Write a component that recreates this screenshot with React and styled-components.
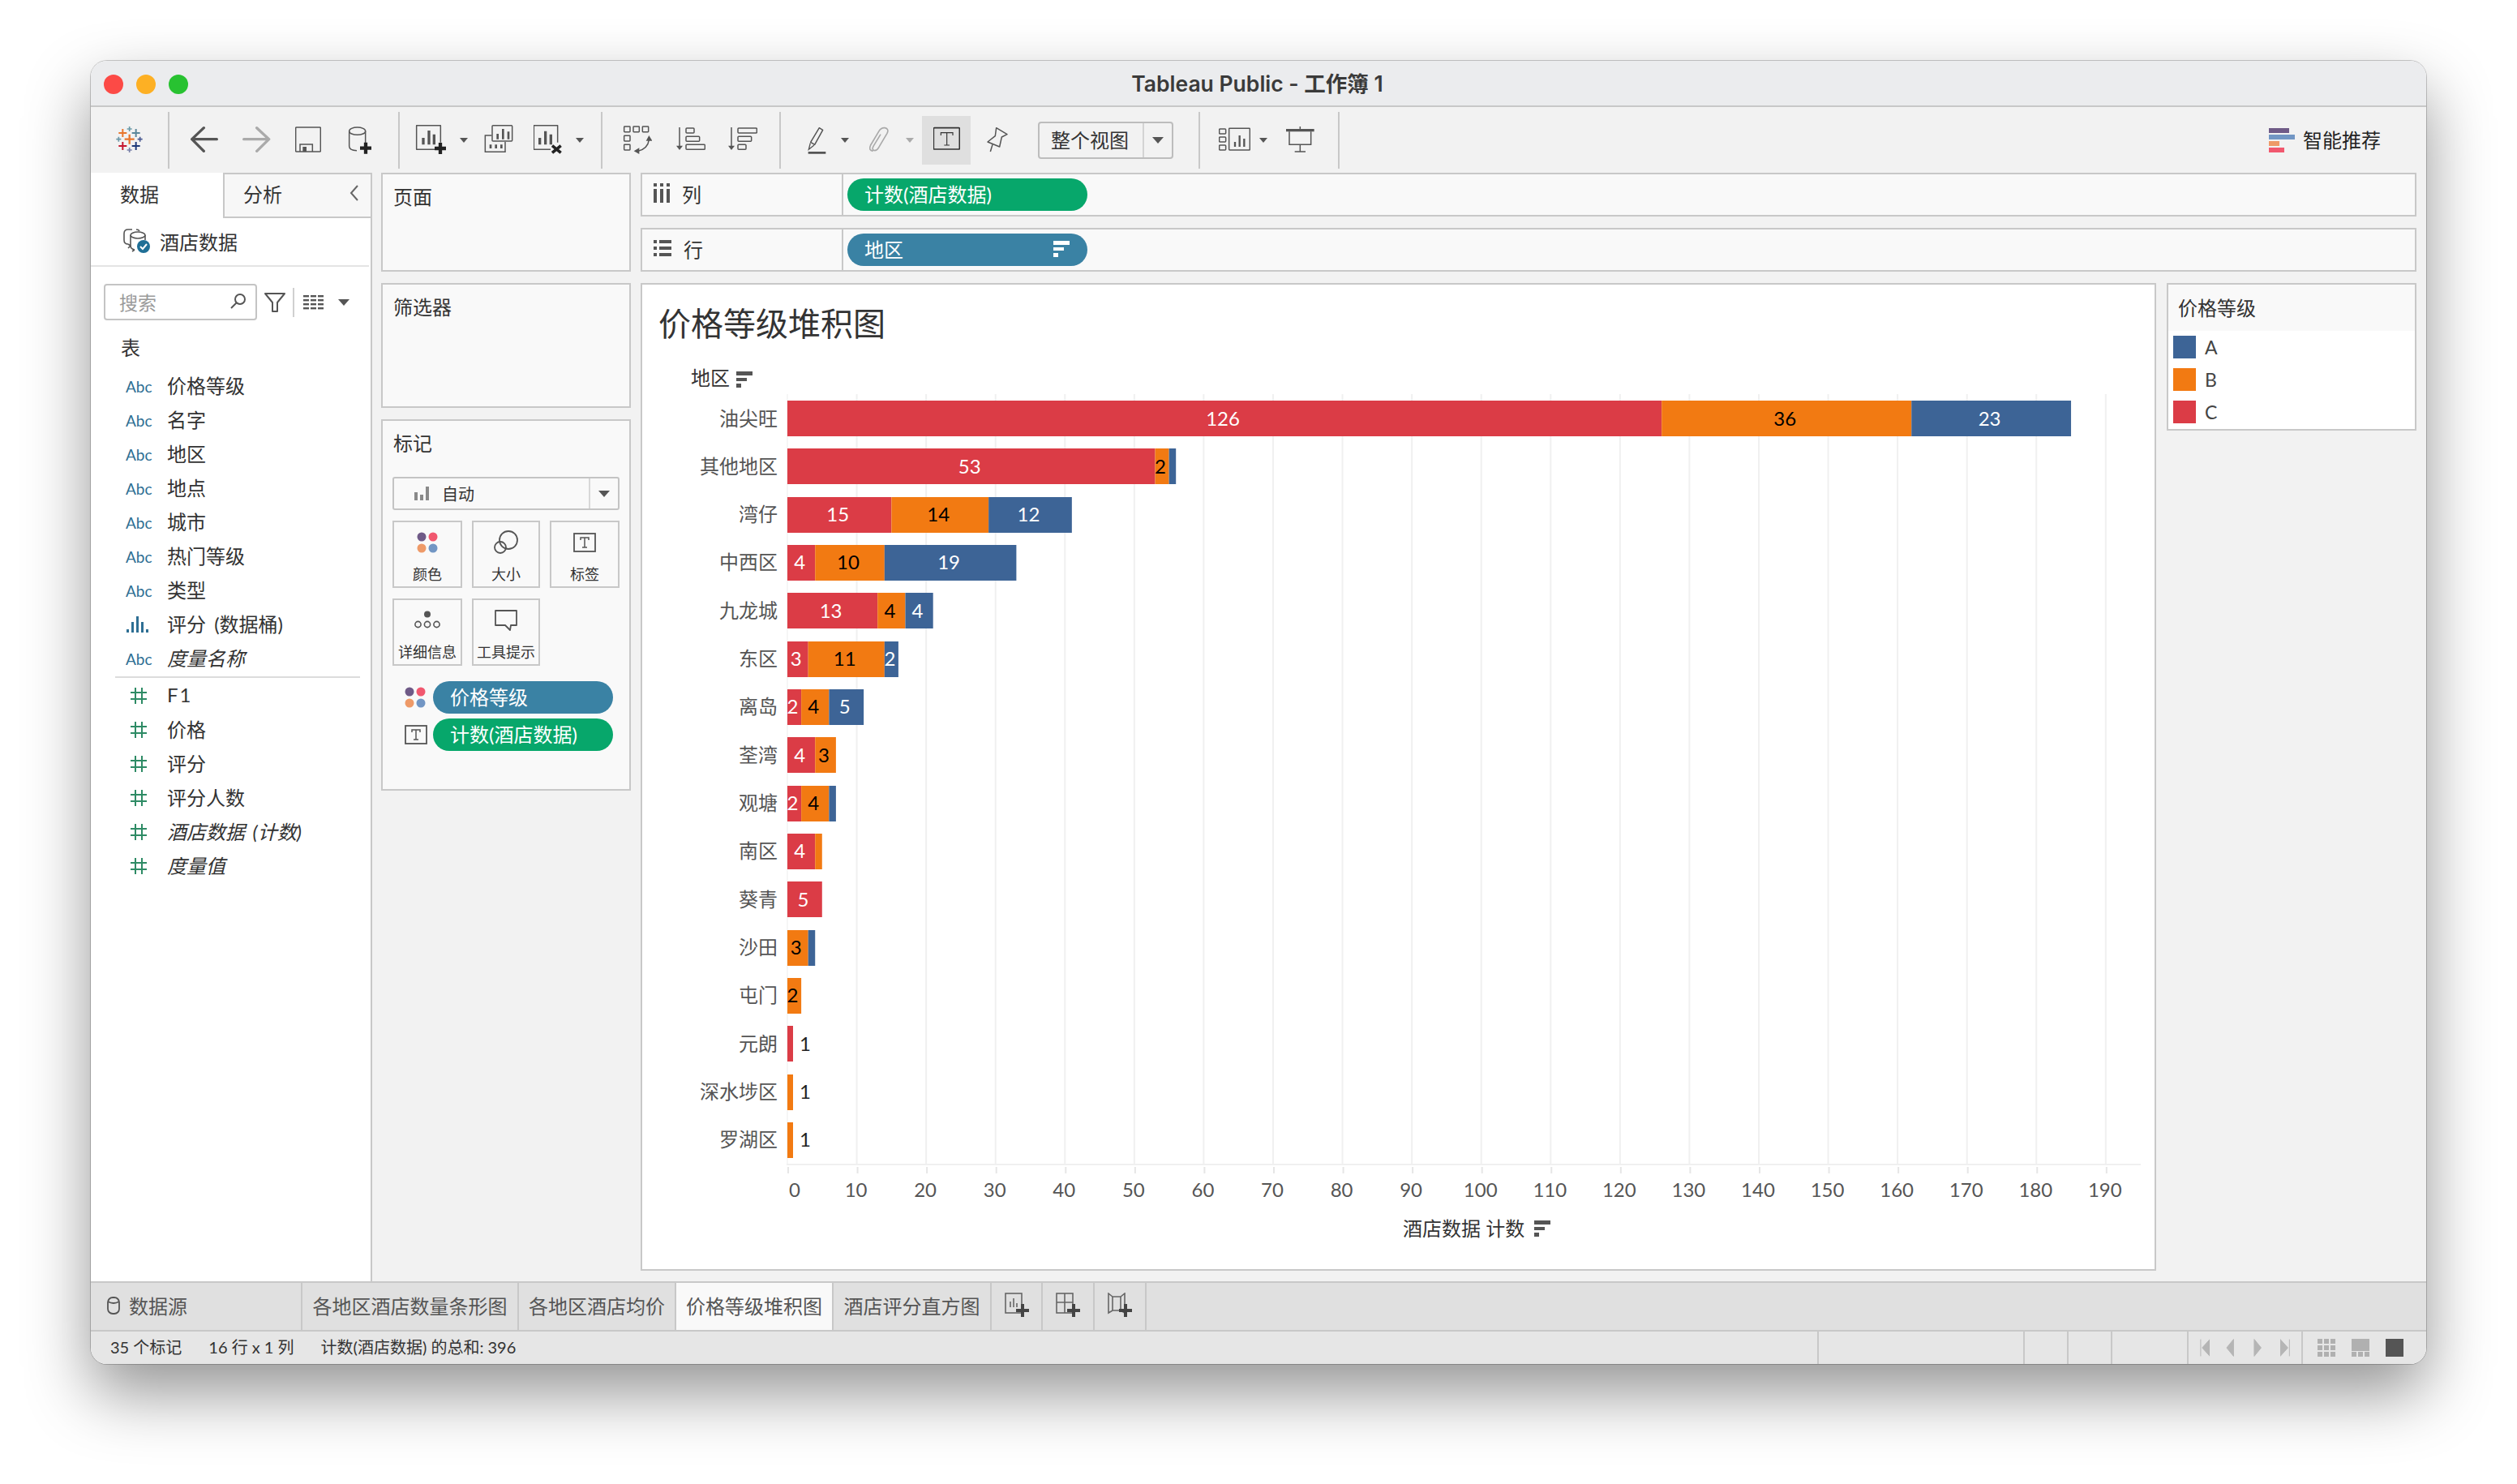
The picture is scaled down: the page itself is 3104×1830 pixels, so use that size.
import React from 'react'
import styled, { createGlobalStyle } from 'styled-components'

const FONT = `Lato, "Noto Sans CJK SC", sans-serif`
const LINE = '#c8c8c8'
const RED = '#db3c46'
const ORANGE = '#f27a12'
const BLUE = '#3d6496'
const GREEN = '#07a76b'
const STEEL = '#3a82a4'

const Global = createGlobalStyle`
  * { box-sizing: border-box; }
  html, body { margin: 0; height: 1830px; background: #fff; overflow: hidden; }
  body { font-family: ${FONT}; color: #333; }
`

const Desktop = styled.div`
  padding: 75px 112px 0;
`

const Win = styled.div`
  width: 2880px;
  height: 1607px;
  border-radius: 20px;
  overflow: hidden;
  display: flex;
  flex-direction: column;
  background: #f2f2f2;
`

const Frame = styled.div`
  border-radius: 20px;
  box-shadow: 0 36px 80px rgba(0,0,0,.42), 0 0 0 1px rgba(0,0,0,.2);
`

const TitleBar = styled.div`
  height: 57px;
  flex: none;
  position: relative;
  display: flex;
  align-items: center;
  justify-content: center;
  padding: 0 3px 3px 0;
  background: #ebecee;
  border-bottom: 2px solid ${LINE};
`

const Lights = styled.div`
  position: absolute;
  left: 16px;
  top: 17px;
  display: flex;
  gap: 16px;
`

const Light = styled.span`
  width: 24px;
  height: 24px;
  border-radius: 50%;
  background: ${p => p.$c};
`

const WinTitle = styled.div`
  font-family: Inter, "Noto Sans CJK SC", sans-serif;
  font-size: 26.5px;
  font-weight: 600;
  color: #3a3a3a;
`

const Toolbar = styled.div`
  height: 81px;
  flex: none;
  display: flex;
  align-items: center;
  padding: 0 56px 0 31px;
`

const Sep = styled.span`
  width: 2px;
  height: 70px;
  background: ${LINE};
  margin-left: ${p => p.$ml}px;
  flex: none;
`

const Tool = styled.span`
  display: flex;
  align-items: center;
  justify-content: center;
  flex: none;
  margin-left: ${p => p.$ml || 0}px;
  width: ${p => p.$w}px;
  height: ${p => p.$h || 55}px;
  background: ${p => p.$on ? '#dfdfdf' : 'none'};
`

const Caret = styled.span`
  flex: none;
  width: 0;
  height: 0;
  margin-left: ${p => p.$ml || 0}px;
  margin-right: ${p => p.$mr || 0}px;
  border-left: ${p => (p.$w || 10) / 2}px solid transparent;
  border-right: ${p => (p.$w || 10) / 2}px solid transparent;
  border-top: ${p => (p.$w || 10) * 0.6}px solid ${p => p.$c || '#555'};
`

const FitBox = styled.div`
  margin-left: 36px;
  width: 167px;
  height: 46px;
  flex: none;
  display: flex;
  align-items: center;
  border: 2px solid #bdbdbd;
  border-radius: 4px;
`

const FitText = styled.div`
  flex: 1;
  font-size: 24px;
  padding: 0 0 3px 14px;
  color: #333;
`

const FitArrow = styled.div`
  width: 36px;
  height: 100%;
  display: flex;
  align-items: center;
  justify-content: center;
  border-left: 2px solid #d4d4d4;
`

const Smart = styled.div`
  margin-left: auto;
  display: flex;
  align-items: center;
  gap: 10px;
  font-size: 24px;
  color: #222;
`

const SmartText = styled.span`
  padding-bottom: 3px;
`

const Body = styled.div`
  height: 1367px;
  flex: none;
  display: flex;
`

const DataPane = styled.div`
  width: 347px;
  flex: none;
  background: #fff;
  border-right: 2px solid ${LINE};
`

const Tabs = styled.div`
  height: 56px;
  display: flex;
`

const PaneTab = styled.div`
  display: flex;
  align-items: center;
  font-size: 24px;
  color: #333;
  width: ${p => p.$w}px;
  padding-left: ${p => p.$pl}px;
  padding-bottom: 6px;
  background: ${p => p.$on ? '#fff' : '#f7f7f7'};
  border-left: ${p => p.$on ? 'none' : `2px solid ${LINE}`};
  border-top: ${p => p.$on ? 'none' : `2px solid ${LINE}`};
  border-bottom: ${p => p.$on ? 'none' : `2px solid ${LINE}`};
`

const Chevron = styled.svg`
  margin-left: auto;
  margin-right: 14px;
`

const SourceRow = styled.div`
  height: 60px;
  margin-right: 2px;
  display: flex;
  align-items: center;
  gap: 11px;
  padding: 0 0 2px 40px;
  font-size: 24px;
  color: #333;
  border-bottom: 2px solid #e4e4e4;
`

const SearchRow = styled.div`
  display: flex;
  align-items: center;
  margin: 21px 0 14px 16px;
`

const SearchBox = styled.div`
  width: 189px;
  height: 45px;
  display: flex;
  align-items: center;
  justify-content: space-between;
  padding: 0 12px 2px 17px;
  margin-right: 9px;
  font-size: 23px;
  color: #9a9a9a;
  border: 2px solid #c4c4c4;
  border-radius: 4px;
`

const VBar = styled.span`
  width: 2px;
  height: 36px;
  background: #d0d0d0;
  margin: 0 11px 0 9px;
`

const SectionHead = styled.div`
  height: 42px;
  line-height: 39px;
  padding-left: 37px;
  font-size: 24px;
  color: #333;
  margin-bottom: 4px;
`

const FieldRow = styled.div`
  height: 42px;
  display: flex;
  align-items: center;
  padding-left: 43px;
`

const TypeSlot = styled.span`
  width: 52px;
  flex: none;
  display: flex;
  align-items: center;
  padding-left: ${p => p.$pl || 0}px;
  font-size: 19px;
  color: #2e6f94;
`

const FieldName = styled.span`
  font-size: 24px;
  margin: -4px 0 0 -1px;
  color: #333;
  font-style: ${p => p.$i ? 'italic' : 'normal'};
  letter-spacing: ${p => p.$sp || 0}px;
  word-spacing: 4px;
`

const ListRule = styled.div`
  height: 2px;
  margin: 1px 13px 1px 30px;
  background: #dcdcdc;
`

const ShelfCol = styled.div`
  width: 308px;
  flex: none;
  margin-left: 11px;
  display: flex;
  flex-direction: column;
  gap: 14px;
`

const Card = styled.div`
  height: ${p => p.$h}px;
  flex: none;
  background: #f9f9f9;
  border: 2px solid ${LINE};
  padding: ${p => p.$pt || 13}px 12px 0 13px;
`

const CardLabel = styled.div`
  font-size: 24px;
  line-height: 30px;
  color: #333;
`

const MarkSelect = styled.div`
  height: 41px;
  width: 280px;
  margin-top: 26px;
  margin-left: -1px;
  display: flex;
  align-items: center;
  border: 2px solid #c4c4c4;
  border-radius: 3px;
  font-size: 20px;
  padding-left: 25px;
  gap: 15px;
`

const MarkArrow = styled.span`
  margin-left: auto;
  width: 36px;
  height: 100%;
  display: flex;
  align-items: center;
  justify-content: center;
  border-left: 2px solid #d8d8d8;
`

const MarkGrid = styled.div`
  display: grid;
  grid-template-columns: 86px 84px 86px;
  column-gap: 12px;
  row-gap: 13px;
  margin: 13px 0 0 -1px;
`

const MarkBtn = styled.div`
  height: 83px;
  display: flex;
  flex-direction: column;
  align-items: center;
  border: 2px solid ${LINE};
  font-size: 18px;
  color: #333;
`

const MarkIcon = styled.div`
  height: 50px;
  display: flex;
  align-items: center;
  justify-content: center;
`

const EncRow = styled.div`
  display: flex;
  align-items: center;
  height: 40px;
  margin-top: ${p => p.$mt}px;
`

const EncIcon = styled.span`
  width: 49px;
  padding-left: 14px;
  display: flex;
  flex: none;
`

const Pill = styled.div`
  display: flex;
  align-items: center;
  justify-content: space-between;
  width: ${p => p.$w}px;
  height: 40px;
  border-radius: 20px;
  padding: 0 22px 3px 21px;
  font-size: 24px;
  color: #fff;
  background: ${p => p.$c};
`

const MainCol = styled.div`
  flex: 1;
  min-width: 0;
  margin: 0 12px;
  display: flex;
  flex-direction: column;
  gap: 14px;
`

const Shelf = styled.div`
  height: 54px;
  flex: none;
  display: flex;
  background: #f9f9f9;
  border: 2px solid ${LINE};
`

const ShelfName = styled.div`
  width: 248px;
  display: flex;
  align-items: center;
  gap: 15px;
  padding: 0 0 4px 14px;
  font-size: 24px;
  color: #333;
  border-right: 2px solid ${LINE};
`

const ShelfBody = styled.div`
  display: flex;
  align-items: center;
  padding-left: 5px;
`

const VizRow = styled.div`
  display: flex;
  gap: 13px;
  height: 1218px;
  flex: none;
`

const Viz = styled.div`
  width: 1869px;
  flex: none;
  background: #fff;
  border: 2px solid ${LINE};
`

const VizTitle = styled.div`
  height: 89px;
  padding: 26px 0 0 20px;
  font-size: 40px;
  line-height: 44px;
  color: #333;
`

const Legend = styled.div`
  width: 308px;
  height: 182px;
  flex: none;
  background: #fff;
  border: 2px solid ${LINE};
`

const LegendHead = styled.div`
  height: 57px;
  display: flex;
  align-items: center;
  padding: 0 0 3px 12px;
  font-size: 24px;
  color: #333;
  background: #f9f9f9;
`

const LegendRow = styled.div`
  height: 40px;
  display: flex;
  align-items: center;
  gap: 11px;
  padding-left: 6px;
  font-size: 23px;
  color: #444;
`

const Swatch = styled.span`
  width: 28px;
  height: 28px;
  background: ${p => p.$c};
`

const SheetBar = styled.div`
  height: 62px;
  flex: none;
  display: flex;
  background: #e0e0e0;
  border-top: 2px solid ${LINE};
  border-bottom: 2px solid ${LINE};
`

const Sheet = styled.div`
  width: ${p => p.$w}px;
  flex: none;
  display: flex;
  align-items: center;
  justify-content: ${p => p.$left ? 'flex-start' : 'center'};
  gap: 11px;
  padding: 0 0 3px ${p => p.$left ? 20 : 0}px;
  font-size: 24px;
  color: #555;
  background: ${p => p.$on ? '#f9f9f9' : 'none'};
  border-right: 2px solid ${LINE};
`

const StatusBar = styled.div`
  height: 40px;
  flex: none;
  display: flex;
  align-items: stretch;
  background: #e6e6e6;
  font-size: 20px;
  color: #333;
`

const StatusText = styled.div`
  width: 2129px;
  display: flex;
  align-items: center;
  padding: 0 0 3px 24px;
  gap: 33px;
  flex: none;
`

const StatusCell = styled.div`
  width: ${p => p.$w}px;
  flex: none;
  display: flex;
  align-items: center;
  justify-content: ${p => p.$between ? 'space-between' : 'flex-start'};
  padding: 0 ${p => p.$pad || 0}px;
  gap: 20px;
  border-left: 2px solid ${LINE};
`

const ChartText = styled.text`
  font-family: ${FONT};
  font-size: ${p => p.$s || 24}px;
`

// ---------- toolbar icons, drawn in the coordinates of a 3x crop of the bar
const Bar = ({ x, w, children }) => (
  <svg width={w} height={55} viewBox={`${x} 0 ${w * 3} 165`} fill="none" stroke="#555" strokeWidth="4.5">
    {children}
  </svg>
)

const Plus = ({ x, y }) => (
  <path d={`M${x - 21} ${y}H${x + 21}M${x} ${y - 21}V${y + 21}`} stroke="#222" strokeWidth="13" />
)

const cross = (x, y, r, c, w = 6) => (
  <path key={`${x}${y}`} d={`M${x - r} ${y}H${x + r}M${x} ${y - r}V${y + r}`} stroke={c} strokeWidth={w} />
)

const TableauLogo = () => (
  <Bar x={40} w={34}>
    {cross(90, 80, 18, '#e8762c', 7)}
    {cross(65, 57, 15, '#e8762c')}
    {cross(114, 57, 15, '#5b879b')}
    {cross(65, 105, 15, '#c5152f')}
    {cross(114, 105, 15, '#1f3a7a')}
    {cross(90, 42, 9, '#6b9aa8', 5)}
    {cross(90, 120, 9, '#7880a8', 5)}
    {cross(50, 80, 9, '#6d98a8', 5)}
    {cross(129, 80, 9, '#4a5a92', 5)}
  </Bar>
)

const BackIcon = () => (
  <Bar x={315} w={34}>
    <path d="M412 80H324M364 38L320 80L364 124" strokeWidth="10" strokeLinecap="round" strokeLinejoin="round" />
  </Bar>
)

const ForwardIcon = () => (
  <Bar x={507} w={35}>
    <path d="M512 80H600M560 38L605 80L560 124" stroke="#aaa" strokeWidth="10" strokeLinecap="round" strokeLinejoin="round" />
  </Bar>
)

const SaveIcon = () => (
  <Bar x={702} w={32}>
    <rect x="704" y="36" width="92" height="90" rx="3" />
    <path d="M720 126V99H766V126" />
    <rect x="730" y="108" width="14" height="18" fill="#555" stroke="none" />
  </Bar>
)

const AddSourceIcon = () => (
  <Bar x={897} w={30}>
    <ellipse cx="932" cy="50" rx="30" ry="14" />
    <path d="M902 50V106Q902 122 930 122M962 50V94" />
    <Plus x={963} y={113} />
  </Bar>
)

const NewSheetIcon = () => (
  <Bar x={1146} w={38}>
    <path d="M1218 118H1151V29H1240V92" strokeLinejoin="round" />
    <path d="M1176 100V75M1197 100V48M1216 100V62" strokeWidth="10" />
    <Plus x={1239} y={114} />
  </Bar>
)

const DuplicateIcon = () => (
  <Bar x={1404} w={36}>
    <path d="M1432 66H1408V127H1482V90" />
    <rect x="1434" y="29" width="74" height="58" rx="3" />
    <path d="M1454 80V60M1474 80V42M1494 80V52M1428 114V100M1448 114V100M1468 114V100" strokeWidth="8" />
  </Bar>
)

const ClearIcon = () => (
  <Bar x={87} w={36}>
    <path d="M150 118H88V29H176V92" strokeLinejoin="round" />
    <path d="M110 100V75M131 100V50M151 100V62" strokeWidth="10" />
    <path d="M156 104L188 130M188 104L156 130" stroke="#222" strokeWidth="11" />
  </Bar>
)

const SwapIcon = () => (
  <Bar x={417} w={36}>
    <rect x="422" y="33" width="22" height="20" rx="2" />
    <rect x="456" y="33" width="22" height="20" rx="2" />
    <rect x="490" y="33" width="22" height="20" rx="2" />
    <rect x="422" y="67" width="22" height="20" rx="2" />
    <rect x="422" y="100" width="22" height="20" rx="2" />
    <path d="M514 82Q510 114 474 124" />
    <path d="M514 66L503 86H526ZM458 124L478 112V135Z" fill="#555" stroke="none" />
  </Bar>
)

const SortAscIcon = () => (
  <Bar x={612} w={36}>
    <path d="M624 36V108" />
    <path d="M612 104H636L624 120Z" fill="#555" stroke="none" />
    <rect x="648" y="39" width="30" height="18" rx="3" />
    <rect x="648" y="70" width="50" height="18" rx="3" />
    <rect x="648" y="100" width="70" height="18" rx="3" />
  </Bar>
)

const SortDescIcon = () => (
  <Bar x={804} w={36}>
    <path d="M816 36V108" />
    <path d="M804 104H828L816 120Z" fill="#555" stroke="none" />
    <rect x="840" y="39" width="70" height="18" rx="3" />
    <rect x="840" y="70" width="50" height="18" rx="3" />
    <rect x="840" y="100" width="30" height="18" rx="3" />
  </Bar>
)

const PenIcon = () => (
  <Bar x={1100} w={23}>
    <path d="M1102 130H1167" strokeWidth="8" />
    <path d="M1143 38L1156 46L1126 100L1111 91Z" strokeLinejoin="round" />
    <path d="M1110 94L1104 118L1124 102" strokeWidth="4" />
  </Bar>
)

const ClipIcon = () => (
  <Bar x={1330} w={26}>
    <path d="M1372 62L1345 106Q1338 120 1350 122Q1358 122 1364 112L1396 58Q1404 42 1388 38Q1374 36 1366 50L1335 102Q1326 122 1344 124" stroke="#aaa" strokeWidth="5" />
  </Bar>
)

const TextBoxIcon = () => (
  <Bar x={65} w={33}>
    <rect x="66" y="38" width="96" height="79" rx="3" stroke="#333" strokeWidth="5" />
    <path d="M93 66V56H137V66M115 56V102M105 102H125" stroke="#333" strokeWidth="3.5" />
  </Bar>
)

const PinIcon = () => (
  <Bar x={262} w={28}>
    <path d="M300 38L340 62L320 72L312 108L268 90L296 68Z" strokeLinejoin="round" />
    <path d="M286 100L278 126" />
  </Bar>
)

const ShowMeIcon = () => (
  <Bar x={1122} w={39}>
    <rect x="1124" y="42" width="24" height="18" rx="3" />
    <rect x="1124" y="72" width="24" height="18" rx="3" />
    <rect x="1124" y="102" width="24" height="18" rx="3" />
    <rect x="1160" y="40" width="77" height="80" rx="2" />
    <path d="M1182 108V90M1199 108V66M1216 108V78" strokeWidth="7" />
  </Bar>
)

const PresentIcon = () => (
  <Bar x={1370} w={35}>
    <path d="M1370 47H1474" strokeWidth="10" />
    <path d="M1382 52V100H1462V52M1422 33V42M1422 100V126M1402 126H1442" />
  </Bar>
)

const SmartIcon = () => (
  <svg width="32" height="30" viewBox="0 0 32 30">
    <rect width="25" height="6" fill="#6f5a87" />
    <rect y="8" width="32" height="6" fill="#7296c4" />
    <rect y="16" width="13" height="6" fill="#ee9a68" />
    <rect y="24" width="19" height="6" fill="#f1586f" />
  </svg>
)

// ---------- data pane icons
const SourceIcon = () => (
  <svg width="34" height="32" viewBox="0 0 34 32" fill="none" stroke="#555" strokeWidth="1.6">
    <path d="M11 2H6Q1 2 1 7V15Q1 20 6 20M16 2Q19 2 20 4" />
    <ellipse cx="18" cy="9" rx="9" ry="4" />
    <path d="M9 9V22Q9 26 14 27M27 9V15M6 20L9 22L6 25M14 27L11 29" />
    <circle cx="25" cy="23" r="8" fill="#1f6f96" stroke="none" />
    <path d="M21 23L24 26L29 20" stroke="#fff" strokeWidth="2" />
  </svg>
)

const Magnifier = () => (
  <svg width="19" height="19" viewBox="0 0 19 19" fill="none" stroke="#555" strokeWidth="2">
    <circle cx="12" cy="7" r="6" />
    <path d="M7.5 11.5L1 18" />
  </svg>
)

const Funnel = () => (
  <svg width="26" height="24" viewBox="0 0 26 24" fill="none" stroke="#555" strokeWidth="2" strokeLinejoin="round">
    <path d="M1 1H25L16 12V23H10V12Z" />
  </svg>
)

const ListIcon = () => (
  <svg width="25" height="18" viewBox="0 0 25 18" fill="#555">
    {[0, 5, 10, 15].map(y => [0, 9, 18].map(x => <rect key={`${x}${y}`} x={x} y={y} width="7" height="2.4" />))}
  </svg>
)

const HistIcon = () => (
  <svg width="30" height="22" viewBox="0 0 30 22" fill="#2e6f94">
    <rect x="1" y="17" width="3" height="4" />
    <rect x="7" y="8" width="3" height="13" />
    <rect x="13" y="1" width="3" height="20" />
    <rect x="19" y="8" width="3" height="13" />
    <rect x="25" y="17" width="3" height="4" />
  </svg>
)

const NumIcon = () => (
  <svg width="20" height="20" viewBox="0 0 20 20" stroke="#2e8b65" strokeWidth="2" fill="none">
    <path d="M6 0V20M14 0V20M0 6H20M0 14H20" />
  </svg>
)

// ---------- marks card icons
const ColorDots = () => (
  <svg width="26" height="26" viewBox="0 0 26 26">
    <circle cx="6" cy="6" r="5.5" fill="#6f5a87" />
    <circle cx="20" cy="6" r="5.5" fill="#f1586f" />
    <circle cx="6" cy="20" r="5.5" fill="#ee9a68" />
    <circle cx="20" cy="20" r="5.5" fill="#7296c4" />
  </svg>
)

const SizeIcon = () => (
  <svg width="30" height="30" viewBox="0 0 30 30" fill="none" stroke="#555" strokeWidth="1.8">
    <circle cx="8" cy="21" r="7" />
    <circle cx="18" cy="12" r="11" />
  </svg>
)

const LabelIcon = () => (
  <svg width="28" height="24" viewBox="0 0 28 24" fill="none" stroke="#555">
    <rect x="1" y="1" width="26" height="22" strokeWidth="1.8" />
    <path d="M9 9V6H19V9M14 6V18M11 18H17" strokeWidth="1.5" />
  </svg>
)

const DetailIcon = () => (
  <svg width="32" height="24" viewBox="0 0 32 24" fill="none" stroke="#555" strokeWidth="1.6">
    <circle cx="16" cy="4.5" r="4" fill="#555" stroke="none" />
    <circle cx="4.5" cy="17" r="3.6" />
    <circle cx="16" cy="17" r="3.6" />
    <circle cx="27.5" cy="17" r="3.6" />
  </svg>
)

const TipIcon = () => (
  <svg width="28" height="27" viewBox="0 0 28 27" fill="none" stroke="#555" strokeWidth="1.8" strokeLinejoin="round">
    <path d="M1 1H27V19H20L19 25L13 19H1Z" />
  </svg>
)

const AutoIcon = () => (
  <svg width="19" height="17" viewBox="0 0 19 17" fill="#8a8a8a">
    <rect y="7" width="4" height="10" />
    <rect x="7" y="10" width="4" height="7" />
    <rect x="14" width="4" height="17" />
  </svg>
)

const SortMark = ({ c }) => (
  <svg width="20" height="20" viewBox="0 0 20 20" fill={c}>
    <rect width="20" height="5" />
    <rect y="8" width="13" height="4" />
    <rect y="15" width="6" height="5" />
  </svg>
)

const ColsIcon = () => (
  <svg width="20" height="24" viewBox="0 0 20 24" fill="#555">
    <rect width="4" height="4" /><rect x="8" width="4" height="4" /><rect x="16" width="4" height="4" />
    <rect y="7" width="4" height="17" /><rect x="8" y="7" width="4" height="17" /><rect x="16" y="7" width="4" height="17" />
  </svg>
)

const RowsIcon = () => (
  <svg width="22" height="20" viewBox="0 0 22 20" fill="#555">
    <rect width="4" height="4" /><rect y="8" width="4" height="4" /><rect y="16" width="4" height="4" />
    <rect x="7" width="15" height="4" /><rect x="7" y="8" width="15" height="4" /><rect x="7" y="16" width="15" height="4" />
  </svg>
)

// ---------- sheet bar icons
const SheetAdd = ({ children }) => (
  <svg width="30" height="32" viewBox="0 0 30 32" fill="none" stroke="#666" strokeWidth="1.6">
    {children}
    <path d="M22 14V30M14 22H30" stroke="#444" strokeWidth="4" />
  </svg>
)

const Cylinder = () => (
  <svg width="16" height="22" viewBox="0 0 16 22" fill="none" stroke="#555" strokeWidth="1.8">
    <rect x="1" y="1" width="14" height="20" rx="6" />
    <path d="M1 6Q8 10 15 6" />
  </svg>
)

const nav = ['M2 0V22M14 0V22L4 11Z', 'M10 0V22L1 11Z', 'M1 0V22L10 11Z', 'M12 0V22M0 0V22L10 11Z']

const NavIcon = ({ d }) => (
  <svg width="14" height="22" viewBox="0 0 14 22" fill="#b5b5b5" stroke="#b5b5b5" strokeWidth="1">
    <path d={d} />
  </svg>
)

const GridView = () => (
  <svg width="22" height="22" viewBox="0 0 22 22" fill="#b0b0b0">
    {[0, 8, 16].map(y => [0, 8, 16].map(x => <rect key={`${x}${y}`} x={x} y={y} width="6" height="6" />))}
  </svg>
)

const SplitView = () => (
  <svg width="22" height="22" viewBox="0 0 22 22" fill="#b0b0b0">
    <rect width="22" height="15" />
    <rect y="16" width="6" height="6" /><rect x="8" y="16" width="6" height="6" /><rect x="16" y="16" width="6" height="6" />
  </svg>
)

const FullView = () => (
  <svg width="22" height="22" viewBox="0 0 22 22"><rect width="22" height="22" fill="#555" /></svg>
)

// ---------- the chart
const rows = [
  ['油尖旺', 126, 36, 23],
  ['其他地区', 53, 2, 1],
  ['湾仔', 15, 14, 12],
  ['中西区', 4, 10, 19],
  ['九龙城', 13, 4, 4],
  ['东区', 3, 11, 2],
  ['离岛', 2, 4, 5],
  ['荃湾', 4, 3, 0],
  ['观塘', 2, 4, 1],
  ['南区', 4, 1, 0],
  ['葵青', 5, 0, 0],
  ['沙田', 0, 3, 1],
  ['屯门', 0, 2, 0],
  ['元朗', 1, 0, 0],
  ['深水埗区', 0, 1, 0],
  ['罗湖区', 0, 1, 0],
]

const X0 = 971
const UNIT = 8.557
const colors = [[RED, '#fff'], [ORANGE, '#000'], [BLUE, '#fff']]
const ticks = Array.from({ length: 20 }, (_, i) => i * 10)

function Chart() {
  return (
    <svg width="1865" height="1125" viewBox="792 440 1865 1125" style={{ display: 'block' }}>
      {ticks.map(t => (
        <g key={t}>
          <rect x={X0 + t * UNIT - 1} y="486" width="2" height="950" fill={t ? '#f0f0f0' : '#f6f6f6'} />
          <rect x={X0 + t * UNIT} y="1439" width="2" height="8" fill="#e6e6e6" />
          <ChartText x={t ? X0 + t * UNIT - 1 : 980} y="1466" textAnchor="middle" dominantBaseline="central" fill="#555">{t}</ChartText>
        </g>
      ))}
      <rect x={X0 - 1} y="1435" width="1670" height="2" fill="#f0f0f0" />
      <ChartText x="852" y="465" dominantBaseline="central" fill="#333">地区</ChartText>
      <g transform="translate(908 458)"><SortMark c="#555" /></g>
      {rows.map(([name, ...vals], i) => {
        const cy = 516 + i * 59.33
        let start = 0
        const total = vals[0] + vals[1] + vals[2]
        return (
          <g key={name}>
            <ChartText x="959" y={cy - 1} textAnchor="end" dominantBaseline="central" fill="#555">{name}</ChartText>
            {vals.map((v, k) => {
              if (!v) return null
              const x = X0 + start * UNIT
              const w = total === 1 ? 7 : v * UNIT
              start += v
              const inside = v > 1
              return (
                <g key={k}>
                  <rect x={x} y={Math.round(cy - 22)} width={w} height="44" fill={colors[k][0]} />
                  {inside && <ChartText x={x + w / 2 - 2} y={cy - 1} textAnchor="middle" dominantBaseline="central" fill={colors[k][1]}>{v}</ChartText>}
                </g>
              )
            })}
            {total === 1 && <ChartText x="993" y={cy - 1} textAnchor="middle" dominantBaseline="central" fill="#222">1</ChartText>}
          </g>
        )
      })}
      <ChartText x="1730" y="1514" dominantBaseline="central" fill="#333">酒店数据 计数</ChartText>
      <g transform="translate(1892 1505)"><SortMark c="#555" /></g>
    </svg>
  )
}

const dimensions = ['价格等级', '名字', '地区', '地点', '城市', '热门等级', '类型']
const measures = [['F1'], ['价格'], ['评分'], ['评分人数'], ['酒店数据 (计数)', true], ['度量值', true]]
const sheets = [['各地区酒店数量条形图', 267], ['各地区酒店均价', 194], ['价格等级堆积图', 194, true], ['酒店评分直方图', 195]]

export default function App() {
  return (
    <>
      <Global />
      <Desktop>
        <Frame>
          <Win>
            <TitleBar>
              <Lights>
                <Light $c="#fc4a46" />
                <Light $c="#fdb024" />
                <Light $c="#28c231" />
              </Lights>
              <WinTitle>Tableau Public - 工作簿 1</WinTitle>
            </TitleBar>

            <Toolbar>
              <Tool $w={34}><TableauLogo /></Tool>
              <Sep $ml={30} />
              <Tool $ml={26} $w={34}><BackIcon /></Tool>
              <Tool $ml={30} $w={35}><ForwardIcon /></Tool>
              <Tool $ml={30} $w={32}><SaveIcon /></Tool>
              <Tool $ml={33} $w={30}><AddSourceIcon /></Tool>
              <Sep $ml={32} />
              <Tool $ml={19} $w={38}><NewSheetIcon /></Tool>
              <Caret $ml={17} $w={11} />
              <Tool $ml={20} $w={36}><DuplicateIcon /></Tool>
              <Tool $ml={25} $w={36}><ClearIcon /></Tool>
              <Caret $ml={16} $w={11} />
              <Sep $ml={21} />
              <Tool $ml={25} $w={36}><SwapIcon /></Tool>
              <Tool $ml={30} $w={36}><SortAscIcon /></Tool>
              <Tool $ml={28} $w={36}><SortDescIcon /></Tool>
              <Sep $ml={27} />
              <Tool $ml={33} $w={23}><PenIcon /></Tool>
              <Caret $ml={18} $w={10} />
              <Tool $ml={25} $w={26}><ClipIcon /></Tool>
              <Caret $ml={19} $w={11} $c="#aaa" />
              <Tool $ml={10} $w={60} $h={60} $on><TextBoxIcon /></Tool>
              <Tool $ml={19} $w={28}><PinIcon /></Tool>
              <FitBox>
                <FitText>整个视图</FitText>
                <FitArrow><Caret $w={14} /></FitArrow>
              </FitBox>
              <Sep $ml={31} />
              <Tool $ml={23} $w={39}><ShowMeIcon /></Tool>
              <Caret $ml={11} $w={10} />
              <Tool $ml={23} $w={35}><PresentIcon /></Tool>
              <Sep $ml={29} />
              <Smart><SmartIcon /><SmartText>智能推荐</SmartText></Smart>
            </Toolbar>

            <Body>
              <DataPane>
                <Tabs>
                  <PaneTab $on $w={163} $pl={36}>数据</PaneTab>
                  <PaneTab $w={182} $pl={23}>
                    分析
                    <Chevron width="12" height="20" viewBox="0 0 12 20" fill="none" stroke="#666" strokeWidth="2">
                      <path d="M10 1L2 10L10 19" />
                    </Chevron>
                  </PaneTab>
                </Tabs>
                <SourceRow><SourceIcon />酒店数据</SourceRow>
                <SearchRow>
                  <SearchBox>搜索<Magnifier /></SearchBox>
                  <Funnel />
                  <VBar />
                  <ListIcon />
                  <Caret $ml={18} $w={14} />
                </SearchRow>
                <SectionHead>表</SectionHead>
                {dimensions.map(d => (
                  <FieldRow key={d}><TypeSlot>Abc</TypeSlot><FieldName>{d}</FieldName></FieldRow>
                ))}
                <FieldRow><TypeSlot><HistIcon /></TypeSlot><FieldName>评分 (数据桶)</FieldName></FieldRow>
                <FieldRow><TypeSlot>Abc</TypeSlot><FieldName $i>度量名称</FieldName></FieldRow>
                <ListRule />
                {measures.map(([m, i]) => (
                  <FieldRow key={m}>
                    <TypeSlot $pl={6}><NumIcon /></TypeSlot>
                    <FieldName $i={i} $sp={m === 'F1' ? 2 : 0}>{m}</FieldName>
                  </FieldRow>
                ))}
              </DataPane>

              <ShelfCol>
                <Card $h={122} $pt={13}><CardLabel>页面</CardLabel></Card>
                <Card $h={154} $pt={13}><CardLabel>筛选器</CardLabel></Card>
                <Card $h={458} $pt={13}>
                  <CardLabel>标记</CardLabel>
                  <MarkSelect>
                    <AutoIcon />自动
                    <MarkArrow><Caret $w={14} /></MarkArrow>
                  </MarkSelect>
                  <MarkGrid>
                    <MarkBtn><MarkIcon><ColorDots /></MarkIcon>颜色</MarkBtn>
                    <MarkBtn><MarkIcon><SizeIcon /></MarkIcon>大小</MarkBtn>
                    <MarkBtn><MarkIcon><LabelIcon /></MarkIcon>标签</MarkBtn>
                    <MarkBtn><MarkIcon><DetailIcon /></MarkIcon>详细信息</MarkBtn>
                    <MarkBtn><MarkIcon><TipIcon /></MarkIcon>工具提示</MarkBtn>
                  </MarkGrid>
                  <EncRow $mt={19}>
                    <EncIcon><ColorDots /></EncIcon>
                    <Pill $w={222} $c={STEEL}>价格等级</Pill>
                  </EncRow>
                  <EncRow $mt={6}>
                    <EncIcon><LabelIcon /></EncIcon>
                    <Pill $w={222} $c={GREEN}>计数(酒店数据)</Pill>
                  </EncRow>
                </Card>
              </ShelfCol>

              <MainCol>
                <Shelf>
                  <ShelfName><ColsIcon />列</ShelfName>
                  <ShelfBody><Pill $w={296} $c={GREEN}>计数(酒店数据)</Pill></ShelfBody>
                </Shelf>
                <Shelf>
                  <ShelfName><RowsIcon />行</ShelfName>
                  <ShelfBody><Pill $w={296} $c={STEEL}>地区<SortMark c="#fff" /></Pill></ShelfBody>
                </Shelf>
                <VizRow>
                  <Viz>
                    <VizTitle>价格等级堆积图</VizTitle>
                    <Chart />
                  </Viz>
                  <Legend>
                    <LegendHead>价格等级</LegendHead>
                    <LegendRow><Swatch $c={BLUE} />A</LegendRow>
                    <LegendRow><Swatch $c={ORANGE} />B</LegendRow>
                    <LegendRow><Swatch $c={RED} />C</LegendRow>
                  </Legend>
                </VizRow>
              </MainCol>
            </Body>

            <SheetBar>
              <Sheet $w={261} $left><Cylinder />数据源</Sheet>
              {sheets.map(([name, w, on]) => <Sheet key={name} $w={w} $on={on}>{name}</Sheet>)}
              <Sheet $w={63}>
                <SheetAdd><rect x="1" y="1" width="20" height="24" /><path d="M7 18V11M11 18V7M15 18V13" /></SheetAdd>
              </Sheet>
              <Sheet $w={64}>
                <SheetAdd><rect x="1" y="1" width="20" height="24" /><path d="M1 12H21M11 1V25" /></SheetAdd>
              </Sheet>
              <Sheet $w={64}>
                <SheetAdd><path d="M1 1L6 5H16L21 1V25L16 22H6L1 25Z" /><path d="M6 5V22M16 5V22" /></SheetAdd>
              </Sheet>
            </SheetBar>

            <StatusBar>
              <StatusText>
                <span>35 个标记</span>
                <span>16 行 x 1 列</span>
                <span>计数(酒店数据) 的总和: 396</span>
              </StatusText>
              <StatusCell $w={254} />
              <StatusCell $w={54} />
              <StatusCell $w={54} />
              <StatusCell $w={94} />
              <StatusCell $w={141} $between $pad={13}>
                {nav.map(d => <NavIcon key={d} d={d} />)}
              </StatusCell>
              <StatusCell $w={154} $pad={18}>
                <GridView /><SplitView /><FullView />
              </StatusCell>
            </StatusBar>
          </Win>
        </Frame>
      </Desktop>
    </>
  )
}
